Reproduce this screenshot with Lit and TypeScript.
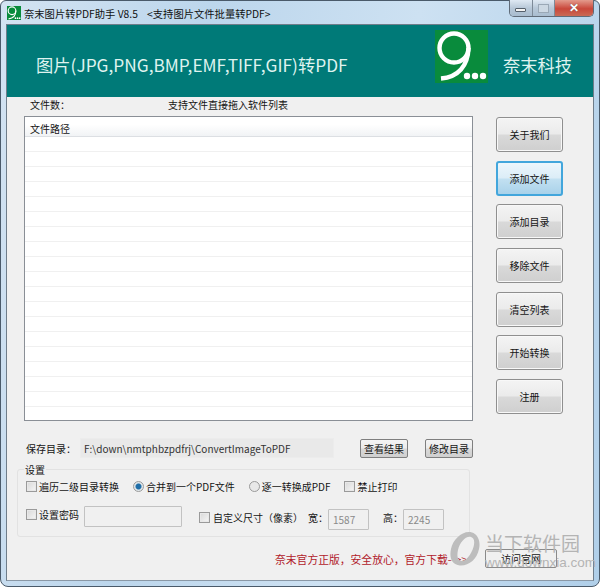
import { LitElement, html, css } from "lit";
import { customElement } from "lit/decorators.js";

const Logo = (s: number) => html`<svg class="logo" width=${s} height=${s} viewBox="0 0 53 53">
  <rect width="53" height="53" fill="#098b3c"/>
  <circle cx="19" cy="18" r="14.5" fill="none" stroke="#fff" stroke-width="4.4"/>
  <path d="M33.5 18 C33 36 23 47 6 48.5" fill="none" stroke="#fff" stroke-width="4.4"/>
  <circle cx="32" cy="46" r="3.2" fill="#fff"/><circle cx="40" cy="46" r="3.2" fill="#fff"/><circle cx="48" cy="46" r="3.2" fill="#fff"/>
</svg>`;

@customElement("app-root")
export class AppRoot extends LitElement {
  static styles = css`
    :host { display: block; width: 600px; height: 587px; overflow: hidden; position: relative;
      font-family: "Noto Sans CJK SC", "DejaVu Sans", sans-serif; font-size: 10px; color: #151515; }
    * { box-sizing: border-box; }
    .window { height: 587px; display: flex; flex-direction: column; border: 1px solid #4a5a6a; border-radius: 6px 6px 8px 8px;
      background: linear-gradient(100deg, #d3e3f2 0%, #bcd6ec 30%, #cde1f2 60%, #b0cfe9 100%); padding: 0 5px 5px; }
    .titlebar { height: 23px; display: flex; align-items: center; flex: none; position: relative; padding-left: 1px; padding-top: 1px; }
    .app-icon { width: 14px; height: 14px; margin-right: 3px; display: flex; }
    .t1 { color: #111; white-space: pre; font-size: 10.3px; }
    .caption { position: absolute; right: 0; top: -1px; display: flex; height: 17px; width: 85px;
      border: 1px solid #5f6b78; border-top: none; border-radius: 0 0 5px 5px; overflow: hidden; }
    .cb { flex: 1; display: flex; align-items: center; justify-content: center; border-right: 1px solid #7d8a98;
      background: linear-gradient(#dfe9f3, #b8c8d8 50%, #a9bccf); }
    .cb.close { flex: none; width: 38px; border: none; background: linear-gradient(#e39a8c, #c9473a 55%, #c96a55); }
    .min { width: 11px; height: 4px; background: #f4f4f4; border: 1px solid #55606c; border-radius: 1px; margin-top: 4px; }
    .max { width: 11px; height: 9px; border: 1px solid #9aa8b6; background: #ccd8e3; }
    .x { color: #fff; font: bold 12px "Liberation Sans", sans-serif; text-shadow: 0 0 1px #444; }

    .client { flex: 1; display: flex; flex-direction: column; background: #f0f0f0; border: 1px solid #6f7d8a; border-bottom-color: #8a98a6; min-height: 0; }
    .banner { height: 72px; flex: none; background: #007a78; display: flex; align-items: center; color: #dff3ef; }
    .banner-title { font-size: 17.3px; margin: 6px 0 0 29px; width: 399px; white-space: nowrap; }
    .logo { display: block; flex: none; }
    .banner .logo { margin-bottom: 9px; }
    .company { font-size: 17.3px; margin: 6px 0 0 15px; white-space: nowrap; }

    .main { display: flex; padding: 0 0 0 17px; flex: none; }
    .left { width: 449px; flex: none; }
    .info { height: 19px; display: flex; align-items: center; padding: 0 0 4px 6px; }
    .info span:first-child { width: 138px; }
    .list { height: 305px; border: 1px solid #8a8f96; background: #fff; overflow: hidden; }
    .head { height: 20px; padding: 3px 0 0 5px; display: flex; align-items: center;
      background: linear-gradient(#fff 40%, #f1f3f5); border-bottom: 1px solid #dcdfe3; }
    .row { height: 15px; border-bottom: 1px solid #f0f0f0; }
    .buttons { margin-left: 23px; padding-top: 20px; display: flex; flex-direction: column; gap: 8.7px; }
    .btn { width: 67px; height: 35px; display: flex; align-items: center; justify-content: center; border: 1px solid #8f8f8f; border-radius: 3px;
      background: linear-gradient(#f4f4f4, #ebebeb 48%, #d9d9d9 52%, #cfcfcf); color: #151515; box-shadow: inset 0 0 0 1px #f8f8f8; }
    .btn.active { border: 2px solid #42a6dc; background: linear-gradient(#ecf6fc, #dcedf7 48%, #c2e0f1 52%, #a9d2ea); box-shadow: none; }
    .btn.small { width: auto; height: 19px; padding: 0 3px; box-shadow: none; border-color: #7f7f7f; border-radius: 2px; }

    .save { display: flex; align-items: center; height: 20px; margin-top: 17px; padding-left: 19px; flex: none; }
    .path { width: 254px; height: 20px; margin-left: 4px; background: #e9e9e9; padding-left: 3px; display: flex; align-items: center; border: 1px solid #ececec; color: #333; white-space: nowrap; }
    .save .b1 { margin-left: 26px; }
    .save .b2 { margin-left: 17px; }

    .group { position: relative; margin: 11px 0 0 10px; width: 453px; height: 68px; flex: none; border: 1px solid #e2e2e2; border-radius: 3px;
      padding: 6px 0 0 8px; display: flex; flex-direction: column; gap: 10px; }
    .legend { position: absolute; left: 6px; top: -6px; background: #f0f0f0; padding: 0 1px; line-height: 12px; }
    .line { display: flex; align-items: center; height: 20px; white-space: nowrap; }
    .ck { width: 11px; height: 11px; border: 1px solid #9a9a9a; background: linear-gradient(135deg, #d8d8d8, #f6f6f6); margin-right: 2px; flex: none; box-shadow: inset 0 0 0 1px #e8e8e8; }
    .rd { width: 11px; height: 11px; border-radius: 50%; border: 1px solid #9a9a9a; background: #e8e8e8; margin-right: 2px; flex: none; }
    .rd.on { background: radial-gradient(circle, #1f6ea8 0 2.5px, #dfe6ea 3.5px); }
    .field { height: 21px; border: 1px solid #c2c2c2; border-radius: 1px; background: #f0f0f0; color: #8a8a8a; display: flex; align-items: center; padding-left: 4px; }
    .m1 { margin-left: 14px; } .m2 { margin-left: 14px; } .m3 { margin-left: 14px; }
    .up { margin-bottom: 4px; }
    .pass { width: 98px; margin-left: 5px; }
    .ck2 { margin-left: 17px; margin-right: 3px; }
    .dn { margin-top: 2px; }
    .num { width: 41px; margin-top: 6px; }
    .wd { margin-left: 5px; }
    .hg { margin-left: 14px; }

    .foot { position: relative; display: flex; align-items: center; height: 19px; margin-top: 12px; flex: none; padding-left: 268px; }
    .red { color: #b0202a; white-space: nowrap; width: 210px; font-size: 10.8px; }
    .foot .btn { position: relative; z-index: 1; width: 72px; height: 19px; box-shadow: none; background: #f0f0f0; border-color: #8a8a8a; border-radius: 2px; }

    .wm { position: absolute; left: 448px; top: 531px; width: 140px; height: 40px; pointer-events: none; z-index: 2; }
    .wm-o { position: absolute; left: 0; top: 0; display: block; }
    .wm-cn { position: absolute; left: 37px; top: 1px; font-size: 19px; line-height: 22px; white-space: nowrap; color: #b4b4b4; }
    .wm-en { position: absolute; left: 37px; top: 24px; font: 13.5px "Liberation Sans", sans-serif; white-space: nowrap; color: #b4b4b4; }
  `;

  render() {
    const rows = Array.from({ length: 19 });
    return html`
      <div class="window">
        <div class="titlebar">
          <span class="app-icon">${Logo(14)}</span>
          <span class="t1">奈末图片转PDF助手 V8.5    &lt;支持图片文件批量转PDF&gt;</span>
          <div class="caption">
            <div class="cb"><div class="min"></div></div>
            <div class="cb"><div class="max"></div></div>
            <div class="cb close"><span class="x">✕</span></div>
          </div>
        </div>
        <div class="client">
          <div class="banner">
            <div class="banner-title">图片(JPG,PNG,BMP,EMF,TIFF,GIF)转PDF</div>
            ${Logo(53)}
            <div class="company">奈末科技</div>
          </div>
          <div class="main">
            <div class="left">
              <div class="info"><span>文件数：</span><span>支持文件直接拖入软件列表</span></div>
              <div class="list">
                <div class="head">文件路径</div>
                ${rows.map(() => html`<div class="row"></div>`)}
              </div>
            </div>
            <div class="buttons">
              <div class="btn">关于我们</div>
              <div class="btn active">添加文件</div>
              <div class="btn">添加目录</div>
              <div class="btn">移除文件</div>
              <div class="btn">清空列表</div>
              <div class="btn">开始转换</div>
              <div class="btn">注册</div>
            </div>
          </div>
          <div class="save">
            <span>保存目录：</span>
            <div class="path">F:\\down\\nmtphbzpdfrj\\ConvertImageToPDF</div>
            <div class="btn small b1">查看结果</div>
            <div class="btn small b2">修改目录</div>
          </div>
          <div class="group">
            <span class="legend">设置</span>
            <div class="line">
              <span class="ck"></span>遍历二级目录转换
              <span class="rd on m1"></span>合并到一个PDF文件
              <span class="rd m2"></span>逐一转换成PDF
              <span class="ck m3"></span>禁止打印
            </div>
            <div class="line">
              <span class="ck up"></span><span class="up">设置密码</span>
              <div class="field pass"></div>
              <span class="ck ck2 dn"></span><span class="dn">自定义尺寸（像素）</span>
              <span class="wd dn">宽：</span>
              <div class="field num">1587</div>
              <span class="hg dn">高：</span>
              <div class="field num">2245</div>
            </div>
          </div>
          <div class="foot">
            <span class="red">奈末官方正版，安全放心，官方下载--&gt;&gt;</span>
            <div class="btn">访问官网</div>
          </div>
        </div>
      </div>
      <div class="wm">
        <svg class="wm-o" width="34" height="36" viewBox="0 0 34 36">
          <path fill="#bdbdbd" fill-rule="evenodd" d="M24 1.5C29 3 33 9 31 18C29 28 21 35 12 34.5C4 34 1 27 3 18C5 8 15 -1 24 1.5ZM23 6C18 4.5 12 11 10 19C8.5 26 10 30 13.500 30C18 30 23 24 25.500 16C27 10 26 7 23 6Z"/>
        </svg>
        <div class="wm-cn">当下软件园</div>
        <div class="wm-en">www.downxia.com</div>
      </div>
    `;
  }
}
